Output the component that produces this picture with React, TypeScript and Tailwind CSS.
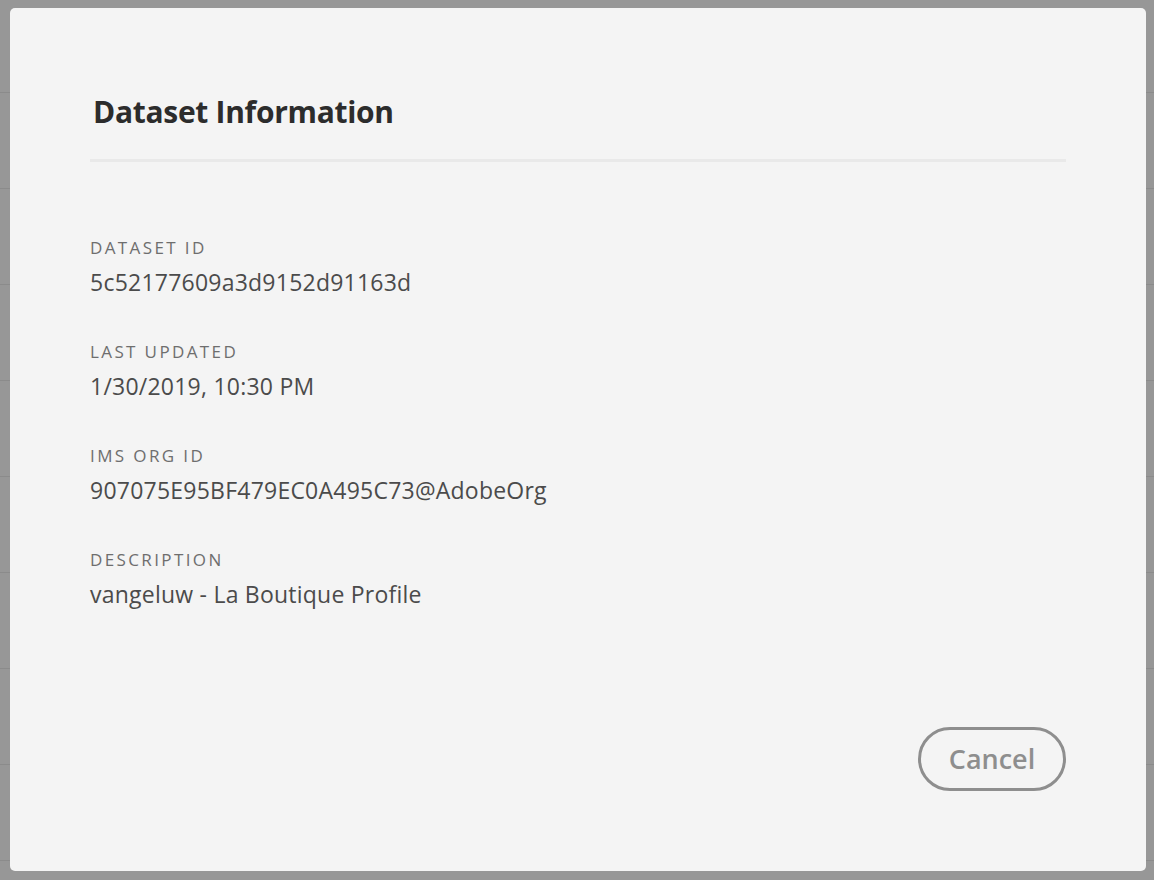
import React from 'react';

const fields = [
  { label: 'Dataset ID', value: '5c52177609a3d9152d91163d' },
  { label: 'Last Updated', value: '1/30/2019, 10:30 PM' },
  { label: 'IMS Org ID', value: '907075E95BF479EC0A495C73@AdobeOrg' },
  { label: 'Description', value: 'vangeluw - La Boutique Profile' },
];

export default function App() {
  return (
    <div className="relative w-[1154px] h-[880px] overflow-hidden bg-[#979797] font-['Open_Sans',sans-serif]">
      {/* table rows behind the overlay */}
      <div className="flex flex-col pt-[92px]">
        {Array.from({ length: 9 }).map((_, i) => (
          <div key={i} className="h-[96px] border-t border-[#8b8b8b]" />
        ))}
      </div>

      {/* Dialog */}
      <div className="absolute left-[10px] top-[8px] w-[1136px] h-[863px] rounded-[5px] bg-[#f4f4f4] px-[80px] pt-[84px] pb-[80px] flex flex-col">
        <h2 className="text-[30px] leading-[40px] font-bold text-[#2c2c2c] pl-[3px] tracking-[-0.01em]">
          Dataset Information
        </h2>
        <div className="mt-[27px] h-[3px] bg-[#e9e9e9]" />

        <div className="mt-[74px] flex flex-col gap-[46px]">
          {fields.map((f) => (
            <div key={f.label} className="flex flex-col">
              <div className="text-[17px] leading-[24px] uppercase tracking-[0.14em] text-[#6e6e6e]">
                {f.label}
              </div>
              <div className="mt-[10px] text-[23px] leading-[24px] tracking-[0.01em] text-[#4b4b4b]">
                {f.value}
              </div>
            </div>
          ))}
        </div>

        <div className="mt-auto flex justify-end">
          <button className="w-[148px] h-[64px] rounded-full border-[3px] border-[#8e8e8e] text-[27px] font-semibold text-[#8e8e8e]">
            Cancel
          </button>
        </div>
      </div>
    </div>
  );
}
